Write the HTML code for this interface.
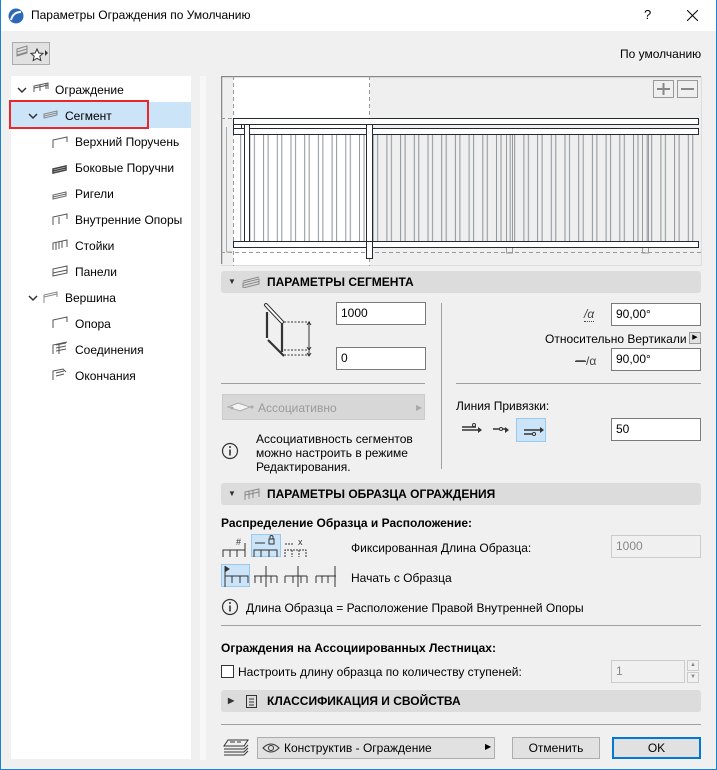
<!DOCTYPE html>
<html><head><meta charset="utf-8"><style>
*{box-sizing:border-box;margin:0;padding:0}
body{width:717px;height:770px;overflow:hidden;background:#f0f0f0;font-family:"Liberation Sans",sans-serif;font-size:12px;color:#000;position:relative}
.a{position:absolute}
.win{position:absolute;left:0;top:0;width:717px;height:770px;border:1px solid #1883d7;border-top:none}
.title{position:absolute;left:0;top:0;width:717px;height:31px;background:#fff}
.tree{left:11px;top:76px;width:180px;height:683px;background:#fff}
.ti{position:absolute;height:26px;line-height:26px;font-size:12px}
.hdr{position:absolute;left:221px;width:480px;height:22px;background:#dcdcdc;border-radius:3px;font-weight:bold;line-height:22px;font-size:12px}
.inp{position:absolute;background:#fff;border:1px solid #7a7a7a;height:23px;line-height:21px;padding-left:4px;font-size:12px}
.dis{background:#f0f0f0;border-color:#ccc;color:#888}
.line{position:absolute;height:1px;background:#a0a0a0}
.btn{position:absolute;background:#e1e1e1;border:1px solid #adadad;height:22px;line-height:20px;text-align:center}
</style></head><body>
<div class="title">
<svg class="a" style="left:8px;top:8px" width="16" height="16"><circle cx="8" cy="8" r="7.5" fill="#2a6ab8"/><path d="M3 12 Q5 4 13 4" stroke="#fff" stroke-width="2" fill="none"/></svg>
<div class="a" style="left:31px;top:8px;font-size:12px">Параметры Ограждения по Умолчанию</div>
<div class="a" style="left:644px;top:7px;font-size:13px">?</div>
<svg class="a" style="left:687px;top:10px" width="11" height="11"><path d="M0 0L11 11M11 0L0 11" stroke="#000" stroke-width="1"/></svg>
</div>
<div class="a" style="left:12px;top:42px;width:38px;height:23px;border:1px solid #adadad;background:#e1e1e1"></div>
<svg class="a" style="left:14px;top:44px" width="34" height="20"><path d="M3 5l10-3v7l-10 3zM3 8l10-3M3 11l10-3" stroke="#888" fill="none"/><path d="M23 5l1.8 4 4.2.4-3.2 2.8 1 4.3-3.8-2.2-3.8 2.2 1-4.3-3.2-2.8 4.2-.4z" fill="#fff" stroke="#333"/><path d="M31 6l3 3-3 3z" fill="#333"/></svg>
<div class="a" style="left:620px;top:47px">По умолчанию</div>

<div class="a tree">
<div class="a" style="left:0;top:26px;width:180px;height:26px;background:#cce4f7"></div>
</div>
<div class="a" style="left:9px;top:100px;width:140px;height:29px;border:2px solid #e8262b"></div>
<svg class="a" style="left:0;top:76px" width="191" height="320" fill="none" stroke="#555">
<path d="M18 12l4 4 4-4M29 38l4 4 4-4M29 220l4 4 4-4" stroke="#333" stroke-width="1.5"/>
<path d="M34 16v-6l14-3v6M34 12l14-3M40 15v-6M46 13v-6"/>
<path d="M44 42l13-3v-4l-13 3zM44 40l13-3" stroke="#888"/>
<path d="M53 72v-8l14-3v5"/>
<path d="M53 97l13-3v-4l-13 3zM53 95l13-3" stroke="#444" stroke-width="1.5"/>
<path d="M53 123l13-3v-4l-13 3zM53 121l13-3" stroke="#666"/>
<path d="M53 149v-8l14-3v5M59 148v-7"/>
<path d="M53 174v-7l14-3v7M56 174v-7M59 173v-7M62 172v-7"/>
<path d="M53 200v-7l14-3v7zM53 197l14-3"/>
<path d="M44 227v-8l13-3v5M44 221l13-3" stroke="#888"/>
<path d="M53 252v-8l14-3v5"/>
<path d="M53 278v-9l14-3M56 269l10-2M56 272l10-2M56 275l10-2M59 269v9"/>
<path d="M53 304v-9l10-2 3 3M56 297l8-2M56 300l8-2"/>
</svg>
<div class="ti" style="left:55px;top:77px">Ограждение</div>
<div class="ti" style="left:65px;top:103px">Сегмент</div>
<div class="ti" style="left:75px;top:129px">Верхний Поручень</div>
<div class="ti" style="left:75px;top:155px">Боковые Поручни</div>
<div class="ti" style="left:75px;top:181px">Ригели</div>
<div class="ti" style="left:75px;top:207px">Внутренние Опоры</div>
<div class="ti" style="left:75px;top:233px">Стойки</div>
<div class="ti" style="left:75px;top:259px">Панели</div>
<div class="ti" style="left:65px;top:285px">Вершина</div>
<div class="ti" style="left:75px;top:311px">Опора</div>
<div class="ti" style="left:75px;top:337px">Соединения</div>
<div class="ti" style="left:75px;top:363px">Окончания</div>

<div class="a" style="left:200px;top:76px;width:6px;height:684px;background:#f7f7f7"></div>

<!-- preview -->
<svg class="a" style="left:221px;top:76px" width="481" height="190">
<defs><pattern id="bal" x="0" y="0" width="13.7" height="110" patternUnits="userSpaceOnUse"><path d="M1.5 0V110M6 0V110" stroke="#8d9499" stroke-width="1"/></pattern></defs>
<rect x="0" y="0" width="481" height="190" fill="#efefef"/>
<rect x="12" y="1" width="137" height="188" fill="#fff"/>
<path d="M0.5 0V188M0 0.5H481" stroke="#888" stroke-width="1.5"/>
<path d="M0 189.5H481M480.5 0V190" stroke="#ddd"/>
<path d="M12.5 0V190M148.5 0V190M0 42.5H12M0 176.5H481" stroke="#999" stroke-dasharray="4 3"/>
<rect x="16" y="58" width="461" height="107" fill="url(#bal)"/>
<path d="M5.5 51V176H11M12.5 51" stroke="#aaa" fill="none"/>
<path d="M285.5 58V177H291.5V58M421.5 58V177H427.5V58" stroke="#999" fill="none"/>
<rect x="12.5" y="42.5" width="465" height="6" fill="#fff" stroke="#222b33"/>
<rect x="12.5" y="52.5" width="465" height="6" fill="#fff" stroke="#222b33"/>
<path d="M12.5 48.5V52.5M20.5 48.5V52.5" stroke="#222b33"/>
<rect x="23.5" y="48.5" width="5" height="117" fill="#fff" stroke="#222b33"/>
<rect x="145.5" y="48.5" width="6" height="134" fill="#fff" stroke="#222b33"/>
<rect x="12.5" y="165.5" width="465" height="6" fill="#fff" stroke="#222b33"/>
<rect x="145.5" y="165.5" width="6" height="17" fill="#fff" stroke="#222b33"/>
<rect x="432.5" y="4.5" width="20" height="17" fill="#efefef" stroke="#999"/>
<rect x="456.5" y="4.5" width="20" height="17" fill="#efefef" stroke="#999"/>
<path d="M436 13H449M442.5 7V19M460 13H473" stroke="#888" stroke-width="2"/>
</svg>

<!-- segment params -->
<div class="hdr" style="top:271px"><span style="position:absolute;left:7px;font-size:8px;color:#333">▼</span>
<svg class="a" style="left:21px;top:5px" width="20" height="12"><path d="M1 7l16-4v5L1 12zM1 9.5l16-4M1 5l16-4" stroke="#888" fill="none"/></svg>
<span style="position:absolute;left:46px">ПАРАМЕТРЫ СЕГМЕНТА</span></div>
<svg class="a" style="left:262px;top:302px" width="60" height="64" fill="none"><path d="M4 3L20 20" stroke="#333" stroke-width="4" stroke-linecap="round"/><path d="M4 3L20 20" stroke="#fff" stroke-width="2" stroke-linecap="round"/><path d="M5 10V36M20 22V50M6 38L22 54" stroke="#333" stroke-width="2.2"/><path d="M22 20H48M22 48H48M22 53H48" stroke="#333" stroke-dasharray="2 1.5"/><path d="M47 21V47M47 49V53" stroke="#333"/><path d="M45 23l2-3 2 3M45 45l2 3 2-3M45 51l2 3 2-3" stroke="#333"/></svg>
<div class="inp" style="left:336px;top:302px;width:90px">1000</div>
<div class="inp" style="left:336px;top:347px;width:90px">0</div>
<div class="line" style="left:221px;top:383px;width:204px"></div>
<div class="a" style="left:441px;top:303px;width:1px;height:166px;background:#a0a0a0"></div>
<div class="a" style="left:222px;top:394px;width:203px;height:26px;background:#d7d7d7;border:1px solid #ccc"></div>
<svg class="a" style="left:226px;top:400px" width="30" height="14"><path d="M2 7l10-4 12 4-10 4z" fill="#f4f4f4" stroke="#aaa"/><circle cx="6" cy="8" r="1.5" fill="#aaa"/><circle cx="26" cy="7" r="1.5" fill="#aaa"/></svg>
<div class="a" style="left:258px;top:401px;color:#9a9a9a">Ассоциативно</div>
<div class="a" style="left:416px;top:403px;font-size:8px;color:#aaa">▶</div>
<svg class="a" style="left:221px;top:442px" width="18" height="18"><circle cx="9" cy="9" r="7.5" fill="none" stroke="#333" stroke-width="1.2"/><path d="M9 7.5V13.5" stroke="#333" stroke-width="1.6"/><circle cx="9" cy="5" r="1" fill="#333"/></svg>
<div class="a" style="left:256px;top:432px;line-height:14px">Ассоциативность сегментов<br>можно настроить в режиме<br>Редактирования.</div>

<div class="a" style="left:584px;top:307px;font-size:12px;color:#444;font-style:italic"><span style="border-bottom:1px dotted #444">/α</span></div>
<div class="inp" style="left:611px;top:303px;width:90px">90,00°</div>
<div class="a" style="left:545px;top:332px">Относительно Вертикали</div>
<div class="a" style="left:689px;top:332px;width:12px;height:12px;border:1px solid #999;background:#e1e1e1;font-size:7px;line-height:10px;text-align:center">▶</div>
<div class="a" style="left:575px;top:352px;font-size:12px;color:#444"><span style="text-decoration:line-through">ᅲ</span>/α</div>
<div class="inp" style="left:611px;top:348px;width:90px">90,00°</div>
<div class="line" style="left:456px;top:383px;width:245px"></div>
<div class="a" style="left:456px;top:399px">Линия Привязки:</div>
<svg class="a" style="left:460px;top:418px" width="100" height="26"><rect x="56.5" y="0.5" width="29" height="23" fill="#cce4f7" stroke="#99c9ef"/><path d="M2 9h14M2 12h16M33 11h12M64 12h18M64 16h12" stroke="#333" stroke-width="1.5"/><path d="M18 9l4 3-4 3zM45 9l4 3-4 3zM80 9l4 3-4 3z" fill="#333"/><circle cx="14" cy="7" r="1.5" fill="#fff" stroke="#333"/><circle cx="41" cy="11" r="1.5" fill="#fff" stroke="#333"/><circle cx="74" cy="16" r="1.5" fill="#fff" stroke="#333"/></svg>
<div class="inp" style="left:611px;top:418px;width:90px">50</div>

<!-- pattern params -->
<div class="hdr" style="top:483px"><span style="position:absolute;left:7px;font-size:8px;color:#333">▼</span>
<svg class="a" style="left:22px;top:4px" width="20" height="14"><path d="M2 13V5l14-3v8M6 12V4M10 11V3M2 8l14-3" stroke="#888" fill="none"/></svg>
<span style="position:absolute;left:46px">ПАРАМЕТРЫ ОБРАЗЦА ОГРАЖДЕНИЯ</span></div>
<div class="a" style="left:221px;top:516px;font-weight:bold">Распределение Образца и Расположение:</div>
<svg class="a" style="left:221px;top:533px" width="115" height="56" fill="none" stroke="#333">
<rect x="30.5" y="1.5" width="29" height="22" fill="#cce4f7" stroke="#99c9ef"/>
<rect x="0.5" y="31.5" width="28" height="22" fill="#cce4f7" stroke="#99c9ef"/>
<path d="M2 24V17H24V24M9 17V24M16 17V24M24 17V10"/>
<text x="15" y="12" font-size="9" fill="#333" stroke="none" font-family="Liberation Sans">#</text>
<path d="M33 24V17H56V24M40 17V24M48 17V24M34 10h10"/>
<rect x="48" y="6" width="5" height="5"/><path d="M49 6V4a1.5 1.5 0 013 0V6"/>
<path d="M64 24V17H85V24M71 17V24M78 17V24M64 11h9" stroke-dasharray="2 1"/>
<text x="77" y="12" font-size="9" fill="#333" stroke="none" font-family="Liberation Sans">x</text>
<path d="M4 33V54M4 43H27V50M11 43V50M19 43V50"/><path d="M5 34l3 2-3 2z" fill="#333"/>
<path d="M33 43H56M34 43V50M40 43V50M50 43V50M56 43V50M45 33V54"/>
<path d="M64 43H86M64 43V50M72 43V50M80 43V50M86 43V50M77 33V54"/>
<path d="M95 43H115M95 43V50M101 43V50M107 43V50M114 33V54"/>
</svg>
<div class="a" style="left:351px;top:541px">Фиксированная Длина Образца:</div>
<div class="inp dis" style="left:611px;top:535px;width:90px">1000</div>
<div class="a" style="left:351px;top:571px">Начать с Образца</div>
<svg class="a" style="left:221px;top:598px" width="18" height="18"><circle cx="9" cy="9" r="7.5" fill="none" stroke="#333" stroke-width="1.2"/><path d="M9 7.5V13.5" stroke="#333" stroke-width="1.6"/><circle cx="9" cy="5" r="1" fill="#333"/></svg>
<div class="a" style="left:246px;top:601px">Длина Образца = Расположение Правой Внутренней Опоры</div>
<div class="line" style="left:221px;top:625px;width:480px"></div>
<div class="a" style="left:221px;top:641px;font-weight:bold">Ограждения на Ассоциированных Лестницах:</div>
<div class="a" style="left:221px;top:665px;width:13px;height:13px;border:1px solid #333;background:#fff"></div>
<div class="a" style="left:238px;top:665px">Настроить длину образца по количеству ступеней:</div>
<div class="inp dis" style="left:611px;top:660px;width:74px">1</div>
<div class="a" style="left:687px;top:660px;width:12px;height:11px;border:1px solid #ccc;font-size:6px;color:#888;text-align:center;line-height:9px">▲</div>
<div class="a" style="left:687px;top:672px;width:12px;height:11px;border:1px solid #ccc;font-size:6px;color:#888;text-align:center;line-height:9px">▼</div>
<div class="hdr" style="top:690px"><span style="position:absolute;left:7px;font-size:8px;color:#333">▶</span>
<svg class="a" style="left:24px;top:4px" width="14" height="15"><path d="M1.5 1.5h10v12h-10zM4 5h5M4 8h5M4 11h5" stroke="#333" fill="none"/></svg>
<span style="position:absolute;left:46px">КЛАССИФИКАЦИЯ И СВОЙСТВА</span></div>
<div class="line" style="left:221px;top:724px;width:480px"></div>
<svg class="a" style="left:222px;top:738px" width="28" height="20"><path d="M6 2h20l-4 6H2zM2 11h20l4-4M2 14h20l4-4M2 17h20l4-4" stroke="#333" fill="none"/><path d="M8 4h5M15 4h4" stroke="#333"/></svg>
<div class="btn" style="left:257px;top:737px;width:238px;text-align:left;padding-left:26px;font-size:12px">Конструктив - Ограждение</div>
<svg class="a" style="left:262px;top:742px" width="18" height="12"><path d="M1 6Q9 -2 17 6Q9 14 1 6z" fill="none" stroke="#333"/><circle cx="9" cy="6" r="2.5" fill="none" stroke="#333"/></svg>
<div class="a" style="left:485px;top:742px;font-size:8px">▶</div>
<div class="btn" style="left:512px;top:737px;width:88px">Отменить</div>
<div class="btn" style="left:612px;top:737px;width:89px;border:2px solid #0078d7;line-height:18px">OK</div>
<div class="win"></div>
</body></html>
